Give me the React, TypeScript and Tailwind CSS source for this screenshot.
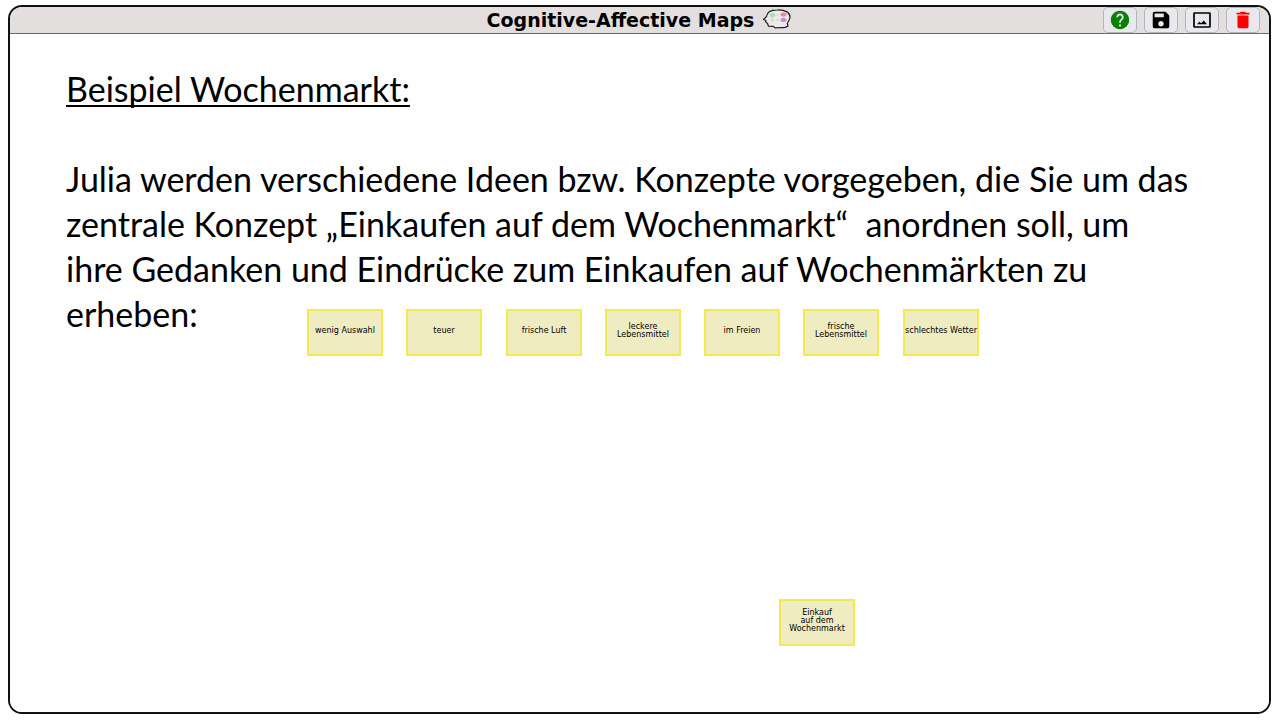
import { MdHelp, MdSave, MdDelete } from "react-icons/md";
import type { ReactNode } from "react";

type Note = { lines: string[]; place: string };

const notes: Note[] = [
  { lines: ["wenig Auswahl"], place: "left-[297px] top-[275px]" },
  { lines: ["teuer"], place: "left-[396px] top-[275px]" },
  { lines: ["frische Luft"], place: "left-[496px] top-[275px]" },
  { lines: ["leckere", "Lebensmittel"], place: "left-[595px] top-[275px]" },
  { lines: ["im Freien"], place: "left-[694px] top-[275px]" },
  { lines: ["frische", "Lebensmittel"], place: "left-[793px] top-[275px]" },
  { lines: ["schlechtes Wetter"], place: "left-[893px] top-[275px]" },
  { lines: ["Einkauf", "auf dem", "Wochenmarkt"], place: "left-[769px] top-[565px]" },
];

function NoteCard({ lines, place }: Note) {
  return (
    <div
      className={`absolute flex h-[47px] w-[76px] flex-col items-center justify-center border-2 border-[#f0ec50] bg-[#f0ecc2] pb-1 text-[8px] leading-[8px] whitespace-nowrap text-black ${place}`}
    >
      {lines.map((line) => (
        <span key={line}>{line}</span>
      ))}
    </div>
  );
}

function ToolButton({ label, children }: { label: string; children: ReactNode }) {
  return (
    <button
      type="button"
      aria-label={label}
      className="flex h-[26px] w-[34px] items-center justify-center rounded-[5px] border border-[#b4b4bc] bg-[#e9e8ec] text-black"
    >
      {children}
    </button>
  );
}

function HeadLogo() {
  return (
    <svg width="30" height="22" viewBox="0 0 30 22" fill="none" aria-hidden="true">
      <path
        d="M6.500 17.200 L5.500 14.500 C5 13.500 4.200 13.500 3.500 12.700 L4 11.500 L1.500 10.500 L4.500 7.500 C5 2.500 9 0.800 15.500 0.800 C23 0.600 28 3.500 28 8 C28 11 26 12.500 25.300 14.500 L26 17 C24.500 18.500 22.500 18.800 20 18.500 L13 18.800 L11.500 17.300 Z"
        fill="#eceaea"
        stroke="#222"
        strokeWidth="1.200"
        strokeLinejoin="round"
      />
      <ellipse cx="10.500" cy="6" rx="2.800" ry="2" fill="#a9dfb4" />
      <ellipse cx="21.500" cy="5.500" rx="3" ry="2" fill="#e58b92" />
      <ellipse cx="21.500" cy="11" rx="3" ry="2" fill="#cf8bd0" />
      <ellipse cx="10.500" cy="11" rx="2" ry="1.200" fill="#dfe3a0" />
      <path d="M14 6h3M14 11h3M10.500 8v2M21.500 8v1" stroke="#c9d6c9" strokeWidth="1" />
    </svg>
  );
}

export default function App() {
  return (
    <div className="flex min-h-screen flex-col bg-white px-2 pt-[5px] pb-[6px] font-['DejaVu_Sans',sans-serif] text-black">
      <div className="mr-px flex grow flex-col overflow-hidden rounded-[14px] border-2 border-[#111]">
        <header className="grid h-[27px] grid-cols-[1fr_auto_1fr] items-center border-b border-[#6b6b6b] bg-[#e2dfde]">
          <h1 className="col-start-2 flex items-center gap-2 text-[19px] leading-6 font-bold">
            Cognitive-Affective Maps
            <HeadLogo />
          </h1>
          <div className="flex justify-end gap-[7px] pr-[9px]">
            <ToolButton label="Hilfe">
              <MdHelp size={22} color="#0b8008" />
            </ToolButton>
            <ToolButton label="Speichern">
              <MdSave size={22} />
            </ToolButton>
            <ToolButton label="Bild exportieren">
              <svg width="18" height="16" viewBox="0 0 18 16" aria-hidden="true">
                <rect x="1" y="1" width="16" height="14" rx="0.500" fill="none" stroke="black" strokeWidth="1.700" />
                <path d="M4 12.300 L6.300 9.800 L8.200 11.300 L10.800 8.600 L14 12.300 Z" />
              </svg>
            </ToolButton>
            <ToolButton label="Löschen">
              <MdDelete size={22} color="#ff0000" />
            </ToolButton>
          </div>
        </header>
        <main className="relative grow bg-white">
          <div className="px-14 pt-8 font-[Lato,sans-serif] text-[34px] leading-[45px] whitespace-pre">
            <h2 className="mb-[45px] underline decoration-2 underline-offset-[3px] [text-decoration-skip-ink:none]">
              Beispiel Wochenmarkt:
            </h2>
            <p>
              Julia werden verschiedene Ideen bzw. Konzepte vorgegeben, die Sie um das
              <br />
              zentrale Konzept „Einkaufen auf dem Wochenmarkt“{"  "}anordnen soll, um
              <br />
              ihre Gedanken und Eindrücke zum Einkaufen auf Wochenmärkten zu
              <br />
              erheben:
            </p>
          </div>
          {notes.map((note) => (
            <NoteCard key={note.place} {...note} />
          ))}
        </main>
      </div>
    </div>
  );
}
